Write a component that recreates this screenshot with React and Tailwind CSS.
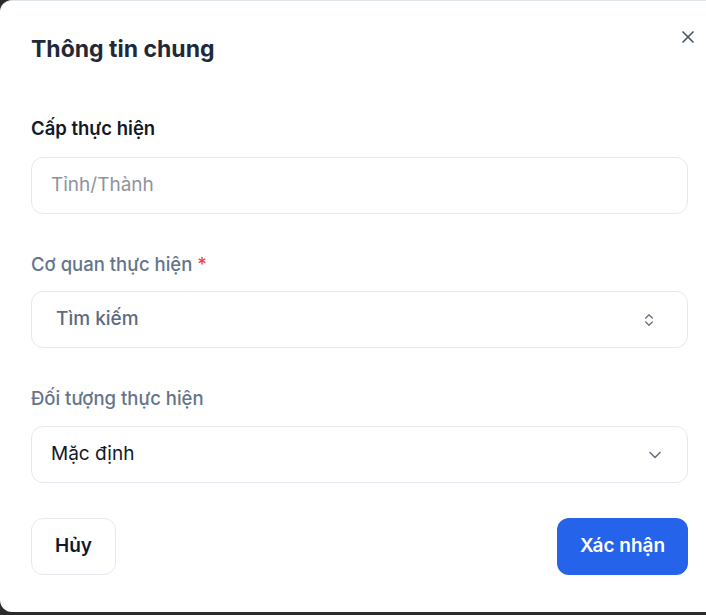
import { X, ChevronsUpDown, ChevronDown } from "lucide-react";

export default function App() {
  const boxStyle =
    "w-full h-[57px] border border-[#e5e9ef] rounded-xl flex items-center text-[19px]";

  return (
    <div
      className="w-[706px] h-[615px] overflow-hidden bg-[#2b2b2b]"
      style={{ fontFamily: "Inter, 'Noto Sans', sans-serif" }}
    >
      <div className="relative w-[740px] h-[612px] bg-white rounded-xl border-t border-[#dfe3ea] pl-[31px] pr-[52px]">
        {/* Close */}
        <button className="absolute top-[26px] left-[678px] text-[#4b5563]">
          <X size={20} strokeWidth={2} />
        </button>

        <h1 className="pt-[31px] text-[23px] leading-[34px] font-bold text-[#1f2937]">
          Thông tin chung
        </h1>

        {/* Cấp thực hiện */}
        <div className="mt-[49px]">
          <label className="block text-[18.5px] leading-[26px] font-semibold text-[#111827]">
            Cấp thực hiện
          </label>
          <div className={`${boxStyle} mt-[16px] px-[19px] text-[#8e939b]`}>
            Tỉnh/Thành
          </div>
        </div>

        {/* Cơ quan thực hiện */}
        <div className="mt-[37px]">
          <label className="block text-[18.5px] leading-[26px] font-medium text-[#64748b]">
            Cơ quan thực hiện <span className="text-[#ef4444]">*</span>
          </label>
          <div className={`${boxStyle} mt-[14px] pl-[24px] pr-[30px] justify-between`}>
            <span className="font-medium text-[#5b6b80]">Tìm kiếm</span>
            <ChevronsUpDown size={16} strokeWidth={2} className="text-[#6b7280]" />
          </div>
        </div>

        {/* Đối tượng thực hiện */}
        <div className="mt-[37px]">
          <label className="block text-[18.5px] leading-[26px] font-medium text-[#64748b]">
            Đối tượng thực hiện
          </label>
          <div className={`${boxStyle} mt-[15px] pl-[19px] pr-[22px] justify-between`}>
            <span className="text-[#111827]">Mặc định</span>
            <ChevronDown size={20} strokeWidth={2} className="text-[#6b7280]" />
          </div>
        </div>

        {/* Buttons */}
        <div className="mt-[35px] flex justify-between">
          <button className="w-[85px] h-[57px] border border-[#e5e9ef] rounded-xl text-[19px] font-semibold text-[#111827]">
            Hủy
          </button>
          <button className="w-[131px] h-[57px] rounded-xl bg-[#2563eb] text-[19px] font-semibold text-white">
            Xác nhận
          </button>
        </div>
      </div>
    </div>
  );
}
